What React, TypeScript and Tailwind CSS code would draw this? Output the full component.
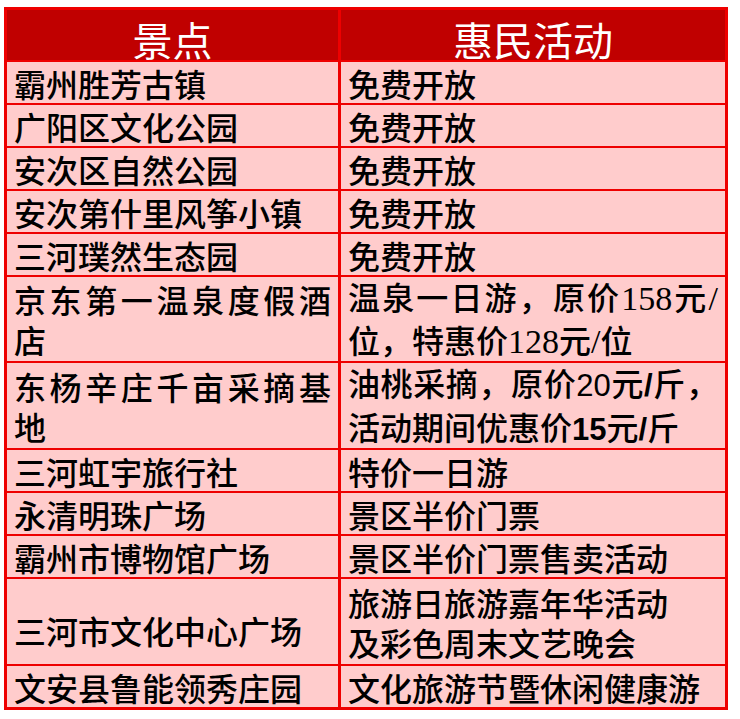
import React from "react";

const S = ({ children }: { children: React.ReactNode }) => (
  <span className="font-['Liberation_Serif',serif] text-[34px]">{children}</span>
);
const A = ({ children, b }: { children: React.ReactNode; b?: boolean }) => (
  <span className={"font-['Liberation_Sans',sans-serif] text-[31px] " + (b ? "font-bold" : "font-normal")}>{children}</span>
);

type Row = {
  h: string;
  left: React.ReactNode;
  right: React.ReactNode;
  leftPad?: string;
};

const J = ({ children }: { children: React.ReactNode }) => (
  <div className="[text-align-last:justify] text-justify">{children}</div>
);

const rows: Row[] = [
  { h: "h-[43px]", left: "霸州胜芳古镇", right: "免费开放" },
  { h: "h-[43px]", left: "广阳区文化公园", right: "免费开放" },
  { h: "h-[43px]", left: "安次区自然公园", right: "免费开放" },
  { h: "h-[43px]", left: "安次第什里风筝小镇", right: "免费开放" },
  { h: "h-[43px]", left: "三河璞然生态园", right: "免费开放" },
  {
    h: "h-[86px]",
    left: (
      <>
        <J>京东第一温泉度假酒</J>
        <div>店</div>
      </>
    ),
    right: (
      <>
        <J>
          温泉一日游，原价<S>158</S>元<S>/</S>
        </J>
        <div>
          位，特惠价<S>128</S>元<S>/</S>位
        </div>
      </>
    ),
  },
  {
    h: "h-[87px]",
    left: (
      <>
        <J>东杨辛庄千亩采摘基</J>
        <div>地</div>
      </>
    ),
    right: (
      <>
        <J>
          油桃采摘，原价<A>20</A>元<A b>/</A>斤，
        </J>
        <div>
          活动期间优惠价<A b>15</A>元<A b>/</A>斤
        </div>
      </>
    ),
  },
  { h: "h-[43px]", left: "三河虹宇旅行社", right: "特价一日游" },
  { h: "h-[43px]", left: "永清明珠广场", right: "景区半价门票" },
  { h: "h-[43px]", left: "霸州市博物馆广场", right: "景区半价门票售卖活动" },
  {
    h: "h-[87px]",
    left: "三河市文化中心广场",
    leftPad: "pt-[16px]",
    right: (
      <>
        <div>旅游日旅游嘉年华活动</div>
        <div>及彩色周末文艺晚会</div>
      </>
    ),
  },
  { h: "h-[43px]", left: "文安县鲁能领秀庄园", right: "文化旅游节暨休闲健康游" },
];

export default function App() {
  return (
    <div className="w-[740px] h-[719px] bg-white overflow-hidden font-['Noto_Sans_CJK_SC',sans-serif] font-medium text-black">
      <div className="ml-[4px] mt-[7px] w-[724px] border-[3px] border-[#ee0000]">
        <div className="flex h-[50px] bg-[#c00000] text-white text-[40px] leading-[40px] font-normal">
          <div className="w-[331px] flex items-center justify-center pt-[8px]">景点</div>
          <div className="w-[3px] bg-[#ee0000]" />
          <div className="flex-1 flex items-center justify-center pt-[8px]">惠民活动</div>
        </div>
        {rows.map((r, i) => (
          <div key={i} className={"flex border-t-[2px] border-[#ee0000] bg-[#ffcccc] text-[32px] leading-[40px] " + r.h}>
            <div className={"w-[331px] px-[7px] flex flex-col justify-center " + (r.leftPad ?? "")}>{r.left}</div>
            <div className="w-[3px] bg-[#ee0000]" />
            <div className="flex-1 px-[7px] flex flex-col justify-center whitespace-nowrap">{r.right}</div>
          </div>
        ))}
      </div>
    </div>
  );
}
